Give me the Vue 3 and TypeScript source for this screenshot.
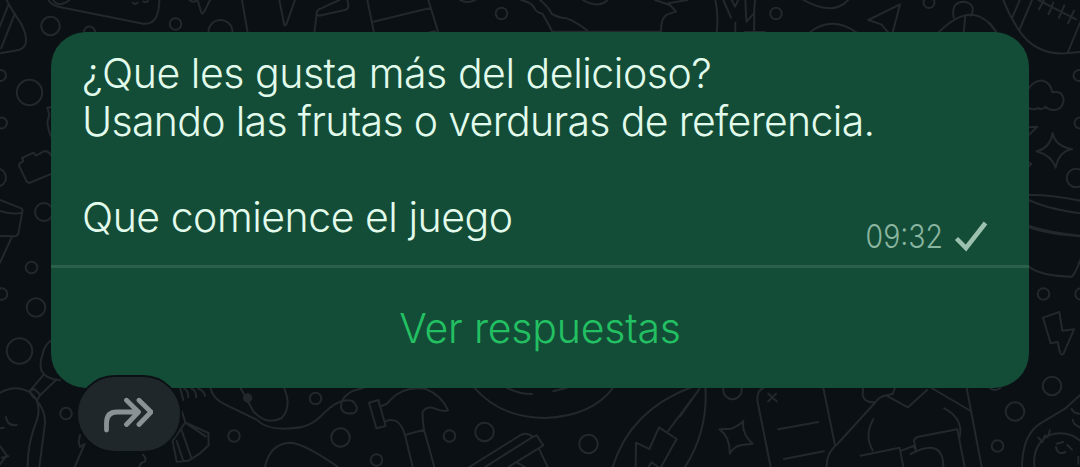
<script setup lang="ts">
const lines: string[] = [
  '¿Que les gusta más del delicioso?',
  'Usando las frutas o verduras de referencia.',
  '',
  'Que comience el juego',
]

// Confetti rings of the wallpaper: [cx, cy, r]
const rings: [number, number, number][] = [
  [50.5, 26, 9.3], [89.5, 32, 5.5], [175.5, 24, 5.8], [220.5, 32, 12],
  [29.5, 92.5, 12.7], [0.5, 75.5, 5.5], [1.5, 123, 5.5], [-3, 177.5, 9],
  [44, 212, 9], [31.5, 267.5, 5.8], [1.5, 294, 5.8], [36, 307.5, 9.3],
  [19.5, 351, 12.7], [66, 413.5, 5.8], [234, 436, 5.8], [501.5, 13.5, 5.8],
  [776, 13.5, 5.8], [929, 2.5, 5.5], [1079, 75.5, 5.5], [1080, 123, 5.5],
  [1076, 178, 9.3], [1043.5, 294, 5.8], [1081, 294, 5.8], [1052, 386, 9.3],
  [1015, 411.5, 9.3], [997.5, 446, 5.8], [315.5, 398.5, 5.8], [340.5, 437.5, 9.3],
  [376.5, 460, 5.8], [449.5, 436, 5.8], [484.5, 432, 9.3], [588.5, 444, 9.3],
  [732.5, 390, 9.3],
]
</script>

<template>
  <main class="chat">
    <svg class="wallpaper" viewBox="0 0 1080 467" aria-hidden="true">
      <circle v-for="(r, i) in rings" :key="i" :cx="r[0]" :cy="r[1]" :r="r[2]" />
      <g transform="scale(.33333)">
        <path d="M20 0Q35 30 64 72Q85 115 75 135Q68 150 45 152L0 160M25 15L-5 90M45 40L3 145M145 0Q155 15 175 20L430 71Q455 75 468 52Q478 30 478 0M160 0Q168 15 185 12Q205 5 208 0M398 8Q405 16 413 8M430 4Q437 9 444 3" />
        <path d="M568 0Q580 10 592 0M594 4L604 38Q608 44 613 34L630 0M726 0L743 98M838 0L853 75Q855 80 859 73L885 0M1018 0L957 28Q948 35 950 43L957 47L1035 30Q1046 27 1045 15L1042 0M950 43L943 98" />
        <path d="M0 600L64 625Q69 628 67 635L55 700Q53 708 45 709L0 708M0 633Q30 645 65 638M36 710L0 788M60 490L70 483L66 474L100 458L108 467L133 453Q150 453 158 475M60 490Q54 495 60 503L80 545L88 549L158 520M158 320L142 323L148 345L142 365Q145 400 158 415" />
      </g>
      <g transform="translate(360) scale(.33333)">
        <path d="M22 0L42 98M40 65L213 23M205 0L235 98M205 98L225 94M300 0Q322 12 345 0M483 0Q518 8 523 25Q532 40 546 40Q560 60 578 98M540 0Q565 20 574 40Q590 52 620 55Q650 65 690 98M578 95L900 95M668 0Q715 27 743 0M885 0L930 15L948 35L922 43Q900 55 904 98M925 10L982 0M1066 0Q1076 45 1070 98" />
      </g>
      <g transform="translate(720) scale(.33333)">
        <path d="M10 0L33 53M35 0L45 20L55 0M105 0L102 40L80 65L78 45L76 0M103 38L102 98M46 68L46 98M75 96H135M250 0Q340 50 384 0M268 98Q335 45 410 98M445 60L540 13L518 98M445 60L484 73L505 98M701 53Q692 5 733 5Q770 12 753 47M655 98Q740 12 800 63Q815 75 830 98M736 48L731 98M846 -10Q864 40 895 88Q945 165 1037 160L1090 155M878 50L899 0M898 90L936 0M955 0L1068 58M972 0L957 28M1000 8L986 42M1033 16L1017 53M1062 32L1044 70M1090 45L1042 160" />
      </g>
      <g transform="translate(990) scale(.33333)">
        <path d="M0 70L20 98M116 265Q135 240 158 242Q182 247 187 277Q218 270 221 301Q217 330 192 330Q174 330 167 320Q158 332 143 324Q131 332 116 324M116 382L142 380L116 405M116 487L124 492L116 500M188 399Q195 438 246 448Q207 454 197 503Q184 466 140 454Q181 443 188 399ZM116 585Q185 583 280 604M116 600Q175 628 280 641M116 677Q175 698 280 708" />
      </g>
      <g transform="translate(990 227) scale(.33333)">
        <path d="M116 0Q175 22 280 28M116 119Q155 148 245 149Q257 140 273 93M159 272L208 255L217 311L252 307L221 379Q215 387 210 377L203 345L182 349ZM280 495L225 545L150 590Q97 625 96 720M135 730Q122 660 175 625Q238 605 280 650M145 632L157 645L165 625L173 630L180 610M200 650L220 645M232 654L246 668M198 660Q203 686 226 675M245 545Q248 558 270 560M248 578Q250 595 275 603M265 690V710" />
      </g>
      <g transform="translate(0 367) scale(.33333)">
        <path d="M158 -82Q135 -70 128 -40Q118 -10 124 10Q135 35 180 40M132 22L88 73M170 37L118 87M87 73L103 66L121 83L112 98L100 91ZM0 78Q45 50 92 77Q125 105 112 155Q82 230 83 300M108 98Q142 135 133 185L118 300M18 150Q22 178 50 174M0 184L12 182M0 237L20 265L0 292M5 272L25 268M240 204L236 225L240 240L254 231L224 300" />
        <path d="M429 263Q441 274 434 284Q420 287 418 300M541 65L550 99M553 65Q565 70 565 91M575 65Q589 70 588 91M595 65Q612 70 615 87M546 134L556 166L522 216M556 166L625 198L626 235L610 250L600 259L566 281L530 284L517 218M556 167L617 208M545 190L573 270M530 222L550 282M632 65Q639 95 675 112L770 158M770 158Q805 196 900 181M723 65L760 133Q800 176 845 153Q876 120 853 65M795 300Q809 230 871 227Q915 230 1014 300" />
        <circle class="filled" cx="743" cy="93" r="11" />
      </g>
      <g transform="translate(290 367) scale(.33333)">
        <path d="M0 184Q60 185 100 140Q150 90 187 102Q212 125 192 138Q157 145 153 120Q155 75 220 63M237 107L265 99L287 177L259 184ZM274 117Q289 115 302 98Q340 57 405 65Q455 85 474 130Q463 136 435 125Q411 115 398 135Q397 160 402 188L345 204Q327 145 287 163M345 204L368 300M402 188L433 300M553 62Q630 152 765 153Q905 148 970 62M650 62Q690 82 726 81M790 73L830 62M538 300L692 204Q714 194 728 210L740 205L760 235L655 300M728 210L585 300M748 247L773 300M680 286L705 300M1205 60Q1020 130 968 300M1037 300L1038 227L1078 246L1107 181L1160 216L1113 300M1075 300L1085 286L1105 300M1132 195L1205 97" />
      </g>
      <g transform="translate(680 367) scale(.33333)">
        <path d="M76 60Q85 190 15 300M58 66L0 148M119 187L155 185Q183 172 190 161Q184 200 218 230L182 235Q162 239 149 260Q151 211 119 187M250 63Q228 73 233 105L272 300M430 63L465 235M265 80L290 103M288 80L264 104M295 187L415 165M312 276L432 253M440 300Q438 257 475 228L587 105Q597 90 618 85L684 121L741 69M549 63L548 85Q555 110 587 105M610 87L638 81L645 63M755 63L872 132M860 63L905 300M580 157Q552 205 578 250M541 266L659 242L670 300M666 250L700 237L708 250L702 220Q704 212 715 209L832 187L854 300M692 261Q790 210 790 300M793 124Q853 156 838 215M930 63Q944 75 961 63" />
      </g>
    </svg>

    <article class="bubble">
      <section class="message">
        <p v-for="(line, i) in lines" :key="i" :class="['line', `line-${i + 1}`]">{{ line }}</p>
        <div class="meta">
          <time>09:32</time>
          <svg class="check" viewBox="0 0 36 32"><path d="M2.5 18.5L12 28L31.5 3" /></svg>
        </div>
      </section>
      <button class="answers">Ver respuestas</button>
    </article>

    <button class="forward" aria-label="Reenviar">
      <svg viewBox="0 0 50 36"><path d="M3.5 33V26Q3.5 15 14 15H34M23.5 3.3L35.5 15L23.5 27.5M36 3.3L48 15L36 27.5" /></svg>
    </button>
  </main>
</template>

<style>
body { margin: 0; background: #0b1014; overflow: hidden; }
</style>

<style scoped>
.chat {
  position: relative;
  box-sizing: border-box;
  width: 1080px;
  height: 467px;
  padding: 32px 51px 0;
  overflow: hidden;
  background: #0b1014;
  font-family: Inter, "Noto Sans", sans-serif;
  font-weight: 270;
}
.wallpaper {
  position: absolute;
  inset: 0;
  width: 1080px;
  height: 467px;
  fill: none;
  stroke: #23282c;
  stroke-width: 2;
  stroke-linecap: round;
  stroke-linejoin: round;
}
.wallpaper g { stroke-width: 6; }
.wallpaper .filled { fill: #23282c; }
.bubble {
  position: relative;
  display: flex;
  flex-direction: column;
  height: 356px;
  border-radius: 35px;
  overflow: hidden;
  background: #144d37;
}
.message {
  position: relative;
  box-sizing: border-box;
  height: 233px;
  padding: 17px 30px 0 31px;
  color: #e2fbec;
}
.line {
  height: 48px;
  margin: 0;
  font-size: 41px;
  line-height: 48px;
  white-space: nowrap;
}
.line-1 { letter-spacing: -0.46px; }
.line-2 { letter-spacing: -0.68px; }
.line-4 { letter-spacing: -0.48px; }
.meta {
  position: absolute;
  right: 39px;
  bottom: 11px;
  display: flex;
  align-items: center;
  gap: 11px;
  color: #8ab5a0;
  font-size: 32px;
  line-height: 36px;
}
.meta time {
  position: relative;
  top: 1px;
  transform: scaleX(0.89);
  transform-origin: right;
}
.check { width: 36px; height: 32px; fill: none; stroke: #9cc2af; stroke-width: 4.5; }
button { border: 0; padding: 0; font: inherit; }
.answers {
  flex: 1;
  padding-bottom: 1px;
  border-top: 3px solid #2b604b;
  background: transparent;
  color: #23c063;
  font-size: 41px;
  line-height: 48px;
  letter-spacing: -0.2px;
}
.forward {
  position: absolute;
  left: 76px;
  top: 375px;
  display: flex;
  align-items: center;
  justify-content: center;
  box-sizing: border-box;
  width: 106px;
  height: 78px;
  padding: 2px 2px 0 0;
  border: 2px solid #0b1014;
  border-radius: 39px;
  background: #20272b;
}
.forward svg {
  width: 50px;
  height: 36px;
  fill: none;
  stroke: #8b9296;
  stroke-width: 4.8;
  stroke-linecap: round;
  stroke-linejoin: round;
}
</style>
